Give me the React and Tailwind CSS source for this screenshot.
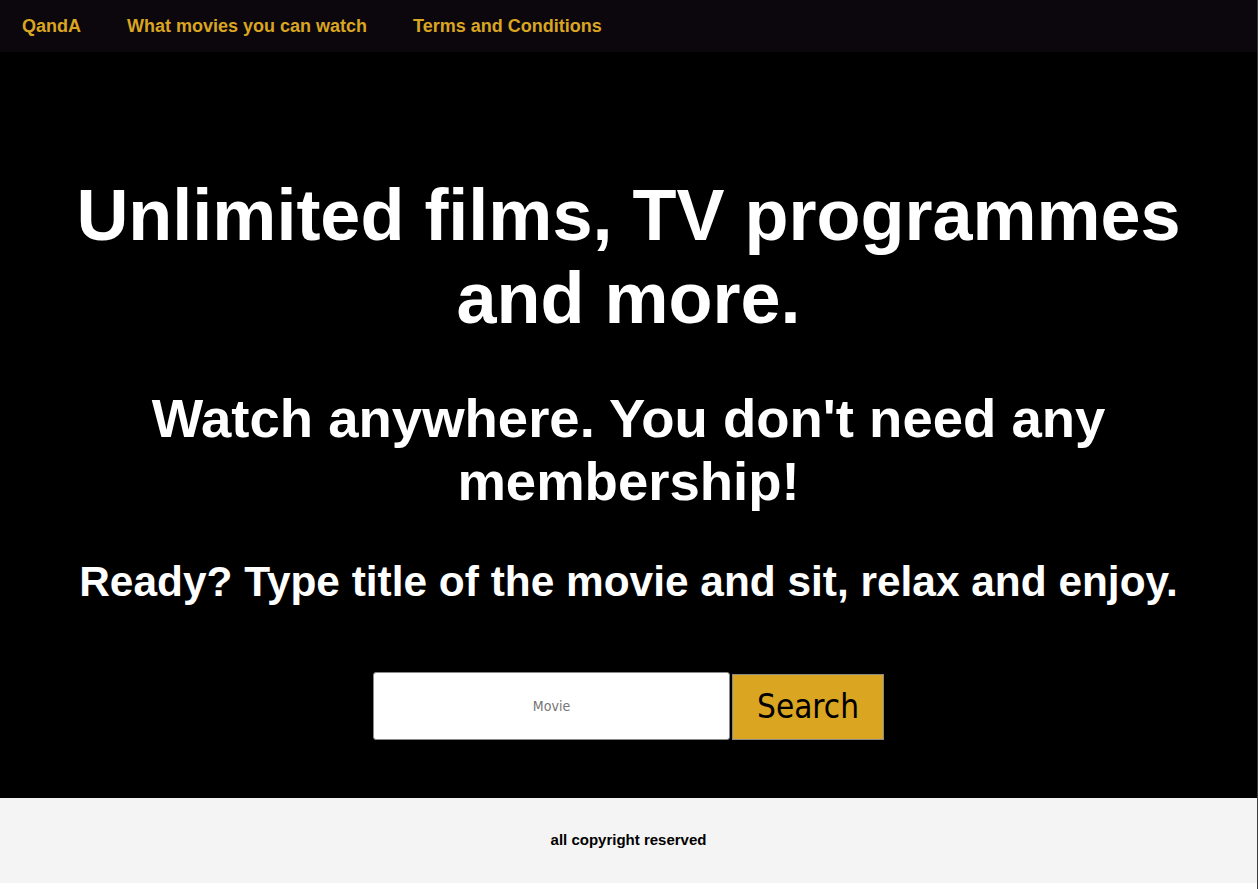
import React, { useState } from "react";

// Landing page: nav, hero with search, footer.
const NAV_LINKS = ["QandA", "What movies you can watch", "Terms and Conditions"];

export default function App() {
  const [movie, setMovie] = useState("");

  return (
    <div className="min-h-screen bg-white font-['Liberation_Sans',Arial,sans-serif] border-r border-[#3a3a3a]">
      {/* Nav */}
      <nav className="h-[52px] bg-[#0b070c] flex items-center pl-[22px] gap-[46px]">
        {NAV_LINKS.map((label) => (
          <a key={label} href="#" className="text-[18px] font-bold text-[#daa520] leading-none">
            {label}
          </a>
        ))}
      </nav>

      {/* Hero */}
      <section className="bg-black text-white text-center pt-[122px] pb-[58px]">
        <h1 className="text-[72px] font-bold leading-[83px] px-10">
          Unlimited films, TV programmes and more.
        </h1>
        <h2 className="mt-[47px] text-[54.5px] font-bold leading-[63px] px-10">
          Watch anywhere. You don't need any membership!
        </h2>
        <h3 className="mt-[45px] text-[42.4px] font-bold leading-[48px]">
          Ready? Type title of the movie and sit, relax and enjoy.
        </h3>

        <form
          className="mt-[66px] flex justify-center items-end"
          onSubmit={(e) => e.preventDefault()}
        >
          <input
            type="text"
            value={movie}
            onChange={(e) => setMovie(e.target.value)}
            placeholder="Movie"
            className="w-[357px] h-[68px] bg-white border border-[#8a8a8a] rounded-[3px] text-center text-[14px] text-black placeholder-[#757575] font-['DejaVu_Sans_Condensed','DejaVu_Sans',sans-serif] outline-none"
          />
          <button
            type="submit"
            className="ml-[2px] w-[152px] h-[66px] bg-[#daa520] border border-[#8a8a8a] text-black text-[33px] font-['DejaVu_Sans_Condensed','DejaVu_Sans',sans-serif]"
          >
            Search
          </button>
        </form>
      </section>

      {/* Footer */}
      <footer className="h-[85px] bg-[#f5f4f5] flex items-center justify-center">
        <p className="text-[15px] font-bold text-black">all copyright reserved</p>
      </footer>
    </div>
  );
}
